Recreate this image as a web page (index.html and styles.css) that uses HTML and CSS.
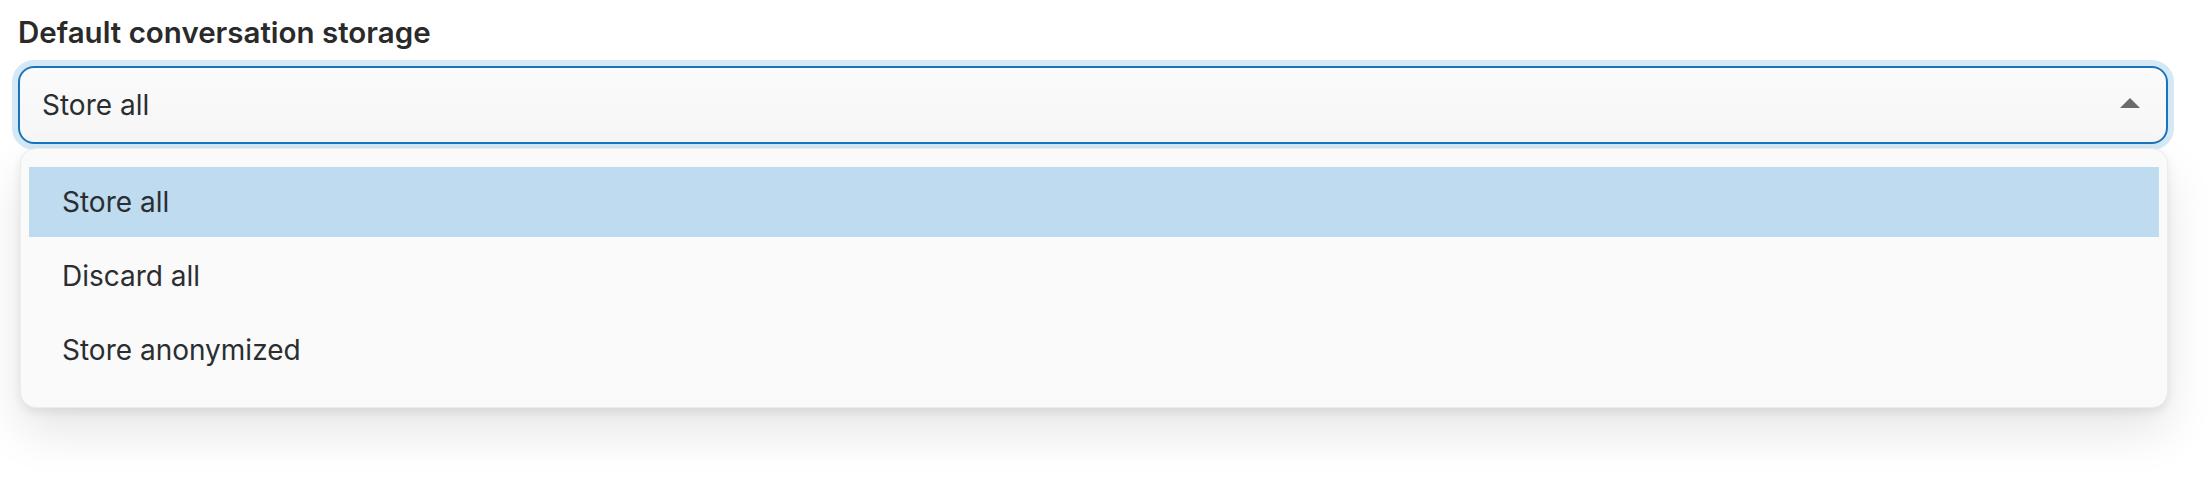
FILE: index.html
```html
<!DOCTYPE html>
<html lang="en">
<head>
    <meta charset="UTF-8">
    <meta name="viewport" content="width=device-width, initial-scale=1.0">
    <title>Conversation storage</title>
    <link rel="stylesheet" href="styles.css">
</head>
<body>
    <div class="field">
        <label class="field-label" for="storage">Default conversation storage</label>
        <div class="select" id="storage">
            <span class="select-value">Store all</span>
            <svg class="select-arrow" width="20" height="10" viewBox="0 0 20 10">
                <path d="M0 10 L10 0 L20 10 Z" fill="#6b6b6b"/>
            </svg>
        </div>
        <ul class="menu">
            <li class="menu-item selected">Store all</li>
            <li class="menu-item">Discard all</li>
            <li class="menu-item">Store anonymized</li>
        </ul>
    </div>
</body>
</html>
```

FILE: styles.css
```css
html, body {
    height: 100%;
}
body {
    margin: 0;
    min-height: 500px;
    box-sizing: border-box;
    padding: 13px 42px 0 18px;
    background-color: #fff;
    font-family: 'Inter', 'Liberation Sans', sans-serif;
    color: #2b2e31;
}
.field-label {
    display: block;
    font-size: 29.5px;
    font-weight: 600;
    color: #2a2a2a;
    line-height: 38px;
    margin-bottom: 15px;
}
.select {
    display: flex;
    align-items: center;
    justify-content: space-between;
    height: 78px;
    box-sizing: border-box;
    padding: 0 26px 0 22px;
    border: 2px solid #1a74bd;
    border-radius: 16px;
    background: linear-gradient(#fbfbfb, #f6f6f6);
    box-shadow: 0 0 0 6px #d5e8f6;
    font-size: 28px;
}
.select-arrow {
    margin-top: -4px;
}
.menu {
    margin: 4px 0 0 2px;
    padding: 18px 8px 22px;
    list-style: none;
    background-color: #fafafa;
    border: 1px solid #ececec;
    border-radius: 16px;
    box-shadow: 0 24px 48px rgba(0, 0, 0, 0.10), 0 4px 10px rgba(0, 0, 0, 0.08);
    display: flex;
    flex-direction: column;
    gap: 4px;
}
.menu-item {
    height: 70px;
    display: flex;
    align-items: center;
    padding-left: 33px;
    font-size: 28px;
    color: #2b2e31;
}
.menu-item.selected {
    background-color: #bedbef;
}
```
